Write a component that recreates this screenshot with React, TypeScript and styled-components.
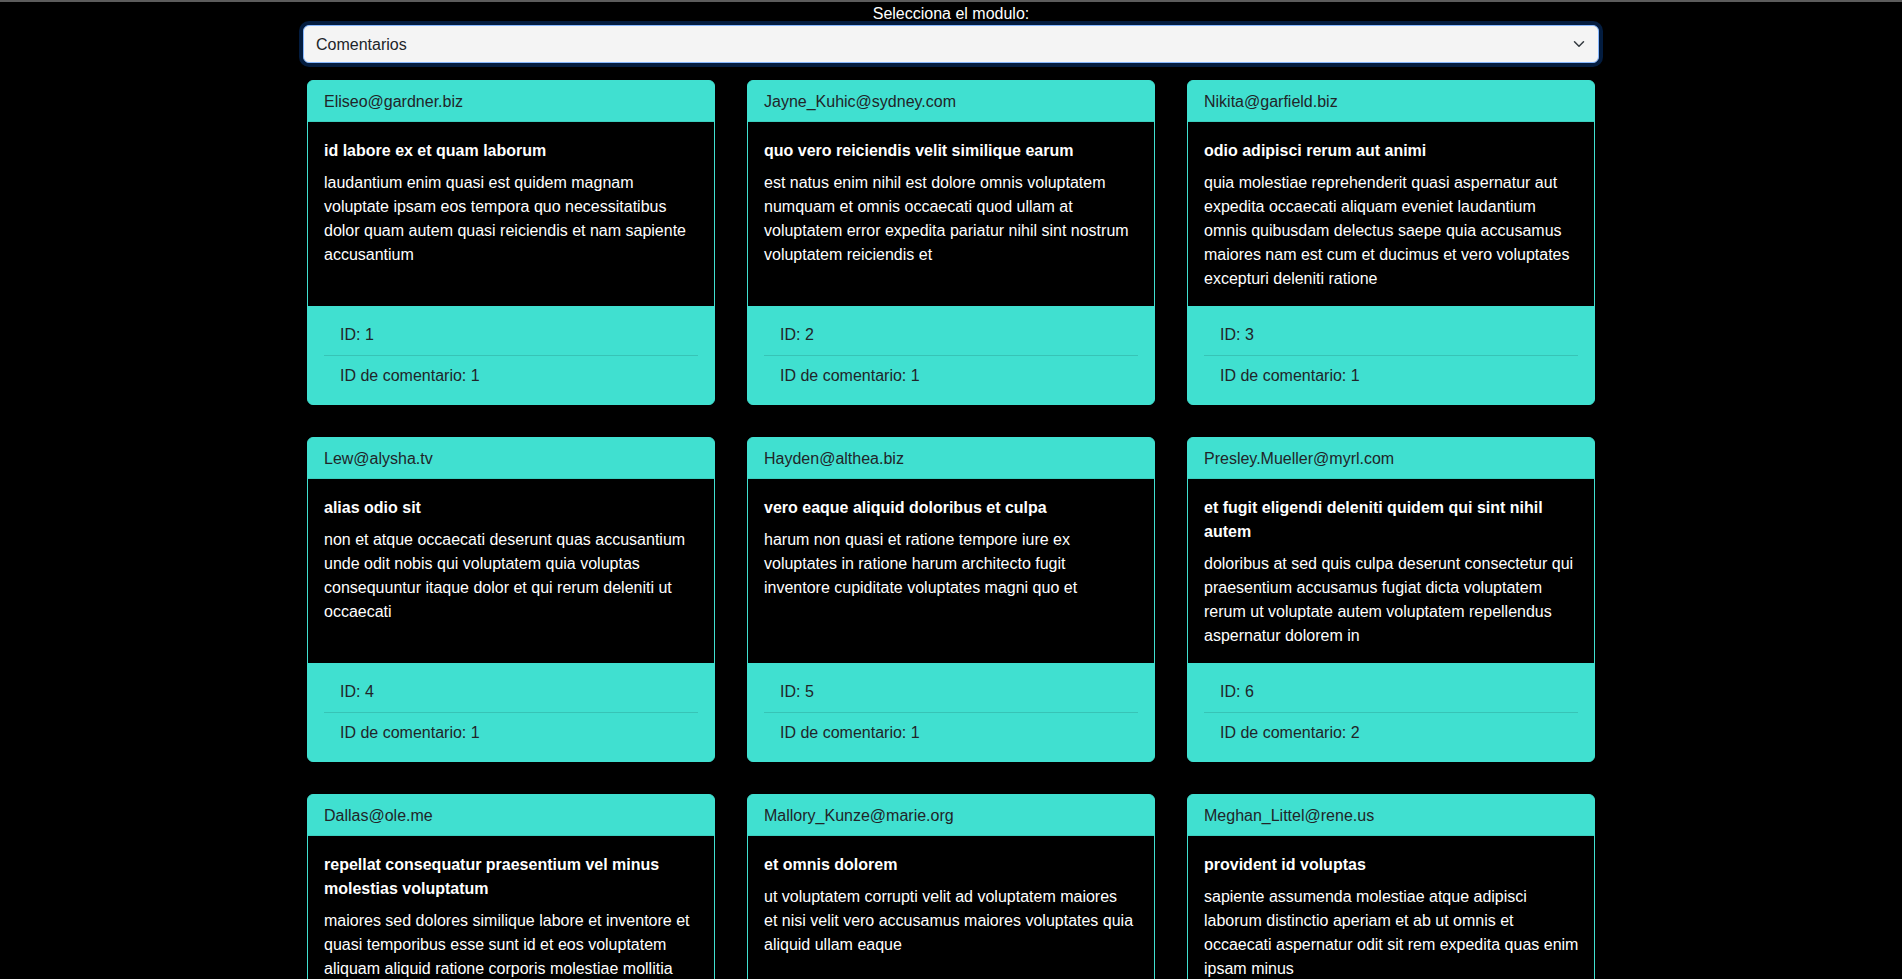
import React, { useState } from "react";
import styled, { createGlobalStyle } from "styled-components";

const GlobalStyle = createGlobalStyle`
  html { scrollbar-width: none; }
  html::-webkit-scrollbar, body::-webkit-scrollbar { display: none; }
  body {
    margin: 0;
    background: #000;
    font-family: "Liberation Sans", Arial, sans-serif;
    font-size: 16px;
    line-height: 24px;
    color: #212529;
  }
  * { box-sizing: border-box; }
`;

const Page = styled.div`
  border-top: 2px solid #5c5c5c;
  min-height: 100vh;
`;

const Container = styled.main`
  width: 1296px;
  margin: 0 auto;
`;

const Label = styled.label`
  display: block;
  text-align: center;
  color: #fff;
  line-height: 22px;
  padding-top: 1px;
`;

const SelectWrap = styled.div`
  position: relative;
  margin-bottom: 17px;
`;

const Select = styled.select`
  display: block;
  width: 100%;
  height: 38px;
  padding: 7px 36px 5px 12px;
  font: inherit;
  color: #212529;
  background: #f4f4f4;
  border: 1px solid #86b7fe;
  border-radius: 6px;
  box-shadow: 0 0 0 4px rgba(13, 110, 253, 0.25);
  appearance: none;
  outline: none;
`;

const Chevron = styled.svg`
  position: absolute;
  right: 12px;
  top: 13px;
  width: 16px;
  height: 12px;
  pointer-events: none;
`;

const Grid = styled.section`
  display: grid;
  grid-template-columns: repeat(3, 408px);
  column-gap: 32px;
  row-gap: 32px;
  padding: 0 4px;
`;

const Card = styled.article`
  display: flex;
  flex-direction: column;
  background: #40e0d0;
  border: 1px solid #40e0d0;
  border-radius: 6px;
  overflow: hidden;
`;

const CardHeader = styled.header`
  padding: 9px 16px 7px;
  color: #212529;
  border-bottom: 1px solid rgba(0, 0, 0, 0.08);
`;

const CardBody = styled.div`
  flex: 1;
  background: #000;
  color: #fff;
  padding: 17px 16px 15px;
`;

const CardTitle = styled.h5`
  margin: 0 0 8px;
  font-size: 16px;
  line-height: 24px;
  font-weight: 700;
`;

const CardText = styled.p`
  margin: 0;
  white-space: pre;
`;

const CardFooter = styled.ul`
  list-style: none;
  margin: 0;
  padding: 9px 16px 7px;
`;

const FooterItem = styled.li<{ $divider?: boolean }>`
  padding: 8px 16px;
  color: #212529;
  border-bottom: 1px solid ${(p) => (p.$divider ? "#37c4b6" : "transparent")};
`;

type Comment = {
  postId: number;
  id: number;
  name: string;
  email: string;
  body: string[];
};

const comments: Comment[] = [
  {
    postId: 1,
    id: 1,
    name: "id labore ex et quam laborum",
    email: "Eliseo@gardner.biz",
    body: [
      "laudantium enim quasi est quidem magnam",
      "voluptate ipsam eos tempora quo necessitatibus",
      "dolor quam autem quasi reiciendis et nam sapiente",
      "accusantium",
    ],
  },
  {
    postId: 1,
    id: 2,
    name: "quo vero reiciendis velit similique earum",
    email: "Jayne_Kuhic@sydney.com",
    body: [
      "est natus enim nihil est dolore omnis voluptatem",
      "numquam et omnis occaecati quod ullam at",
      "voluptatem error expedita pariatur nihil sint nostrum",
      "voluptatem reiciendis et",
    ],
  },
  {
    postId: 1,
    id: 3,
    name: "odio adipisci rerum aut animi",
    email: "Nikita@garfield.biz",
    body: [
      "quia molestiae reprehenderit quasi aspernatur aut",
      "expedita occaecati aliquam eveniet laudantium",
      "omnis quibusdam delectus saepe quia accusamus",
      "maiores nam est cum et ducimus et vero voluptates",
      "excepturi deleniti ratione",
    ],
  },
  {
    postId: 1,
    id: 4,
    name: "alias odio sit",
    email: "Lew@alysha.tv",
    body: [
      "non et atque occaecati deserunt quas accusantium",
      "unde odit nobis qui voluptatem quia voluptas",
      "consequuntur itaque dolor et qui rerum deleniti ut",
      "occaecati",
    ],
  },
  {
    postId: 1,
    id: 5,
    name: "vero eaque aliquid doloribus et culpa",
    email: "Hayden@althea.biz",
    body: [
      "harum non quasi et ratione tempore iure ex",
      "voluptates in ratione harum architecto fugit",
      "inventore cupiditate voluptates magni quo et",
    ],
  },
  {
    postId: 2,
    id: 6,
    name: "et fugit eligendi deleniti quidem qui sint nihil autem",
    email: "Presley.Mueller@myrl.com",
    body: [
      "doloribus at sed quis culpa deserunt consectetur qui",
      "praesentium accusamus fugiat dicta voluptatem",
      "rerum ut voluptate autem voluptatem repellendus",
      "aspernatur dolorem in",
    ],
  },
  {
    postId: 2,
    id: 7,
    name: "repellat consequatur praesentium vel minus molestias voluptatum",
    email: "Dallas@ole.me",
    body: [
      "maiores sed dolores similique labore et inventore et",
      "quasi temporibus esse sunt id et eos voluptatem",
      "aliquam aliquid ratione corporis molestiae mollitia",
      "quia et magnam dolor",
    ],
  },
  {
    postId: 2,
    id: 8,
    name: "et omnis dolorem",
    email: "Mallory_Kunze@marie.org",
    body: [
      "ut voluptatem corrupti velit ad voluptatem maiores",
      "et nisi velit vero accusamus maiores voluptates quia",
      "aliquid ullam eaque",
    ],
  },
  {
    postId: 2,
    id: 9,
    name: "provident id voluptas",
    email: "Meghan_Littel@rene.us",
    body: [
      "sapiente assumenda molestiae atque adipisci",
      "laborum distinctio aperiam et ab ut omnis et",
      "occaecati aspernatur odit sit rem expedita quas enim",
      "ipsam minus",
    ],
  },
];

function CommentCard({ c }: { c: Comment }) {
  return (
    <Card>
      <CardHeader>{c.email}</CardHeader>
      <CardBody>
        <CardTitle>{c.name}</CardTitle>
        <CardText>{c.body.join("\n")}</CardText>
      </CardBody>
      <CardFooter>
        <FooterItem $divider>ID: {c.id}</FooterItem>
        <FooterItem>ID de comentario: {c.postId}</FooterItem>
      </CardFooter>
    </Card>
  );
}

export default function App() {
  const [modulo, setModulo] = useState("comentarios");
  return (
    <Page>
      <GlobalStyle />
      <Container>
        <Label htmlFor="modulo">Selecciona el modulo:</Label>
        <SelectWrap>
          <Select id="modulo" value={modulo} onChange={(e) => setModulo(e.target.value)}>
            <option value="publicaciones">Publicaciones</option>
            <option value="comentarios">Comentarios</option>
            <option value="albumes">Albumes</option>
            <option value="fotos">Fotos</option>
            <option value="tareas">Tareas</option>
            <option value="usuarios">Usuarios</option>
          </Select>
          <Chevron viewBox="0 0 16 16" fill="none">
            <path d="m2 5 6 6 6-6" stroke="#343a40" strokeWidth="2" strokeLinecap="round" strokeLinejoin="round" />
          </Chevron>
        </SelectWrap>
        <Grid>
          {comments.map((c) => (
            <CommentCard key={c.id} c={c} />
          ))}
        </Grid>
      </Container>
    </Page>
  );
}
